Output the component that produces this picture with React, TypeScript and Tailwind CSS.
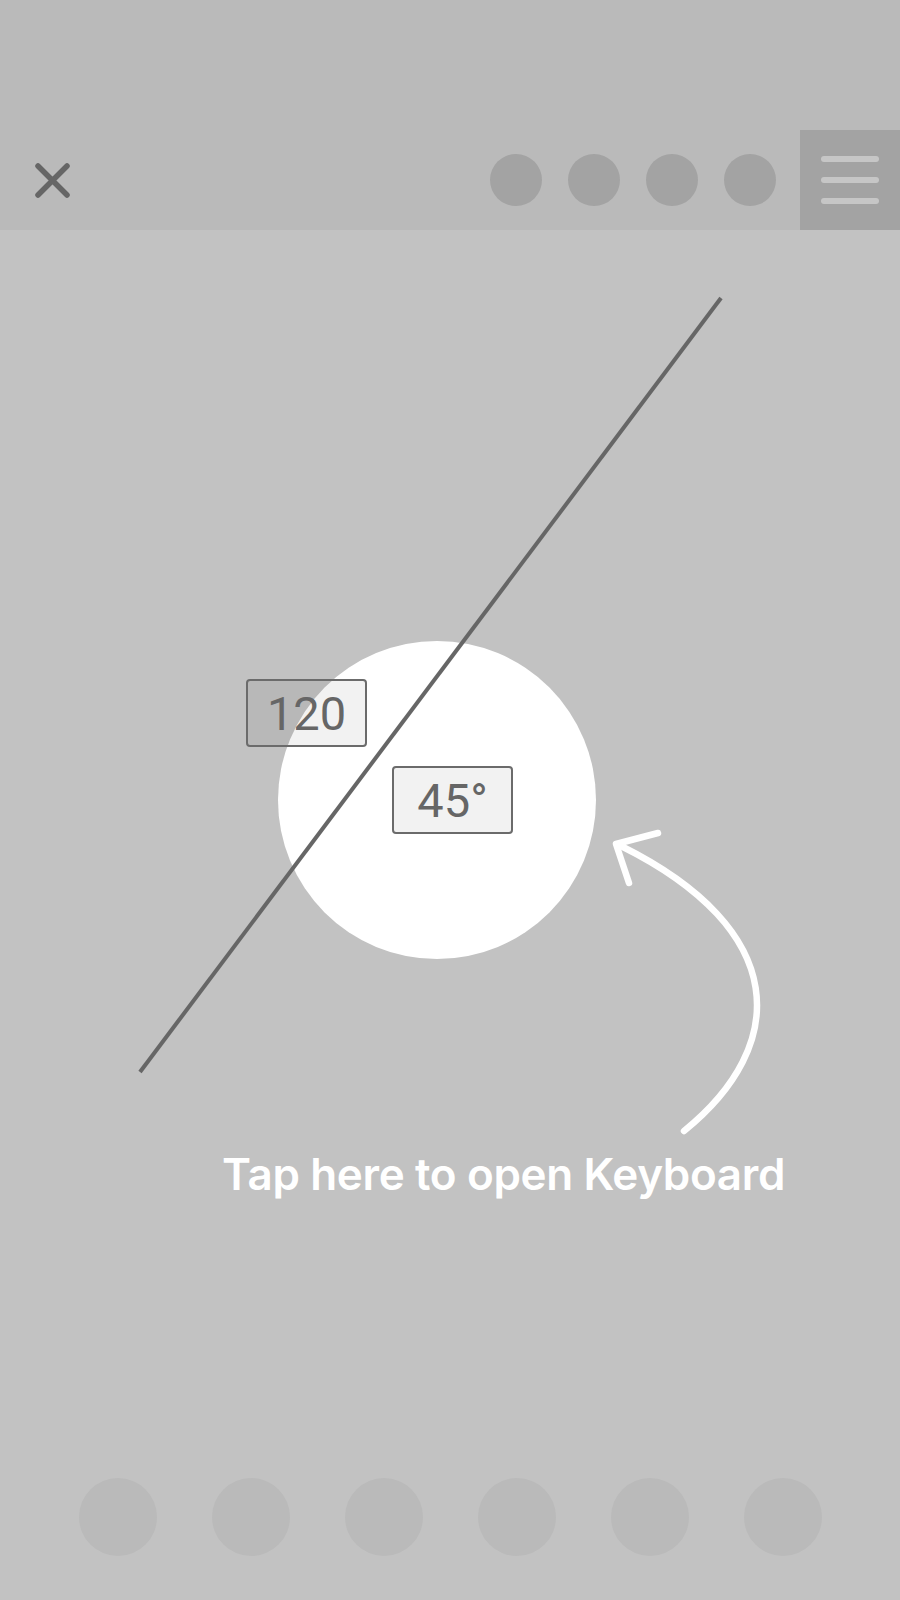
import React from 'react';

const HeaderDot = () => <div className="h-[52px] w-[52px] rounded-full bg-[#a3a3a3]" />;

const FooterDot = () => <div className="h-[78px] w-[78px] rounded-full bg-[#bababa]" />;

const ValueBox = ({ children, className }: { children: React.ReactNode; className: string }) => (
  <div
    className={`absolute flex h-[68px] w-[121px] items-center justify-center rounded-[4px] border-2 border-[#6b6b6b] bg-black/5 font-['Roboto'] text-[47px] leading-none text-[#666666] ${className}`}
  >
    {children}
  </div>
);

export default function App() {
  return (
    <div className="flex h-[1600px] w-[900px] flex-col overflow-hidden bg-[#c2c2c2] font-['Inter',sans-serif]">
      {/* status area + toolbar */}
      <div className="bg-[#bababa] pt-[130px]">
        <div className="flex h-[100px] items-center">
          <button className="ml-[35px] flex h-[35px] w-[35px] items-center justify-center text-[#666666]">
            <svg viewBox="0 0 35 35" className="h-[35px] w-[35px]">
              <path d="M3 3 L32 32 M32 3 L3 32" stroke="currentColor" strokeWidth="5.5" strokeLinecap="round" />
            </svg>
          </button>
          <div className="ml-auto mr-6 flex gap-[26px]">
            <HeaderDot />
            <HeaderDot />
            <HeaderDot />
            <HeaderDot />
          </div>
          <button className="flex h-full w-[100px] flex-col items-start justify-center gap-[15px] bg-[#a3a3a3] pl-[21px]">
            <span className="h-[6px] w-[58px] rounded-full bg-[#c6c6c6]" />
            <span className="h-[6px] w-[58px] rounded-full bg-[#c6c6c6]" />
            <span className="h-[6px] w-[58px] rounded-full bg-[#c6c6c6]" />
          </button>
        </div>
      </div>

      {/* canvas */}
      <div className="relative flex-1">
        <div className="absolute left-[278px] top-[411px] h-[318px] w-[318px] rounded-full bg-white" />
        <svg className="absolute inset-0 h-full w-full" viewBox="0 0 900 1248" preserveAspectRatio="none">
          <line x1="721" y1="68" x2="140" y2="842" stroke="#666666" strokeWidth="4" />
          <g stroke="#ffffff" strokeWidth="6.5" strokeLinecap="round" strokeLinejoin="round" fill="none">
            <path d="M684 901 C790 815 790 700 621 616" />
            <path d="M658 603 L616 614 L629 653" />
          </g>
        </svg>
        <ValueBox className="left-[246px] top-[449px]">120</ValueBox>
        <ValueBox className="left-[392px] top-[536px]">45°</ValueBox>
        <p className="absolute left-[222px] top-[922px] whitespace-nowrap text-[44px] font-semibold leading-[44px] tracking-[-0.35px] text-white">
          Tap here to open Keyboard
        </p>
      </div>

      {/* bottom tools */}
      <div className="flex justify-center gap-[55px] pb-[44px]">
        <FooterDot />
        <FooterDot />
        <FooterDot />
        <FooterDot />
        <FooterDot />
        <FooterDot />
      </div>
    </div>
  );
}
